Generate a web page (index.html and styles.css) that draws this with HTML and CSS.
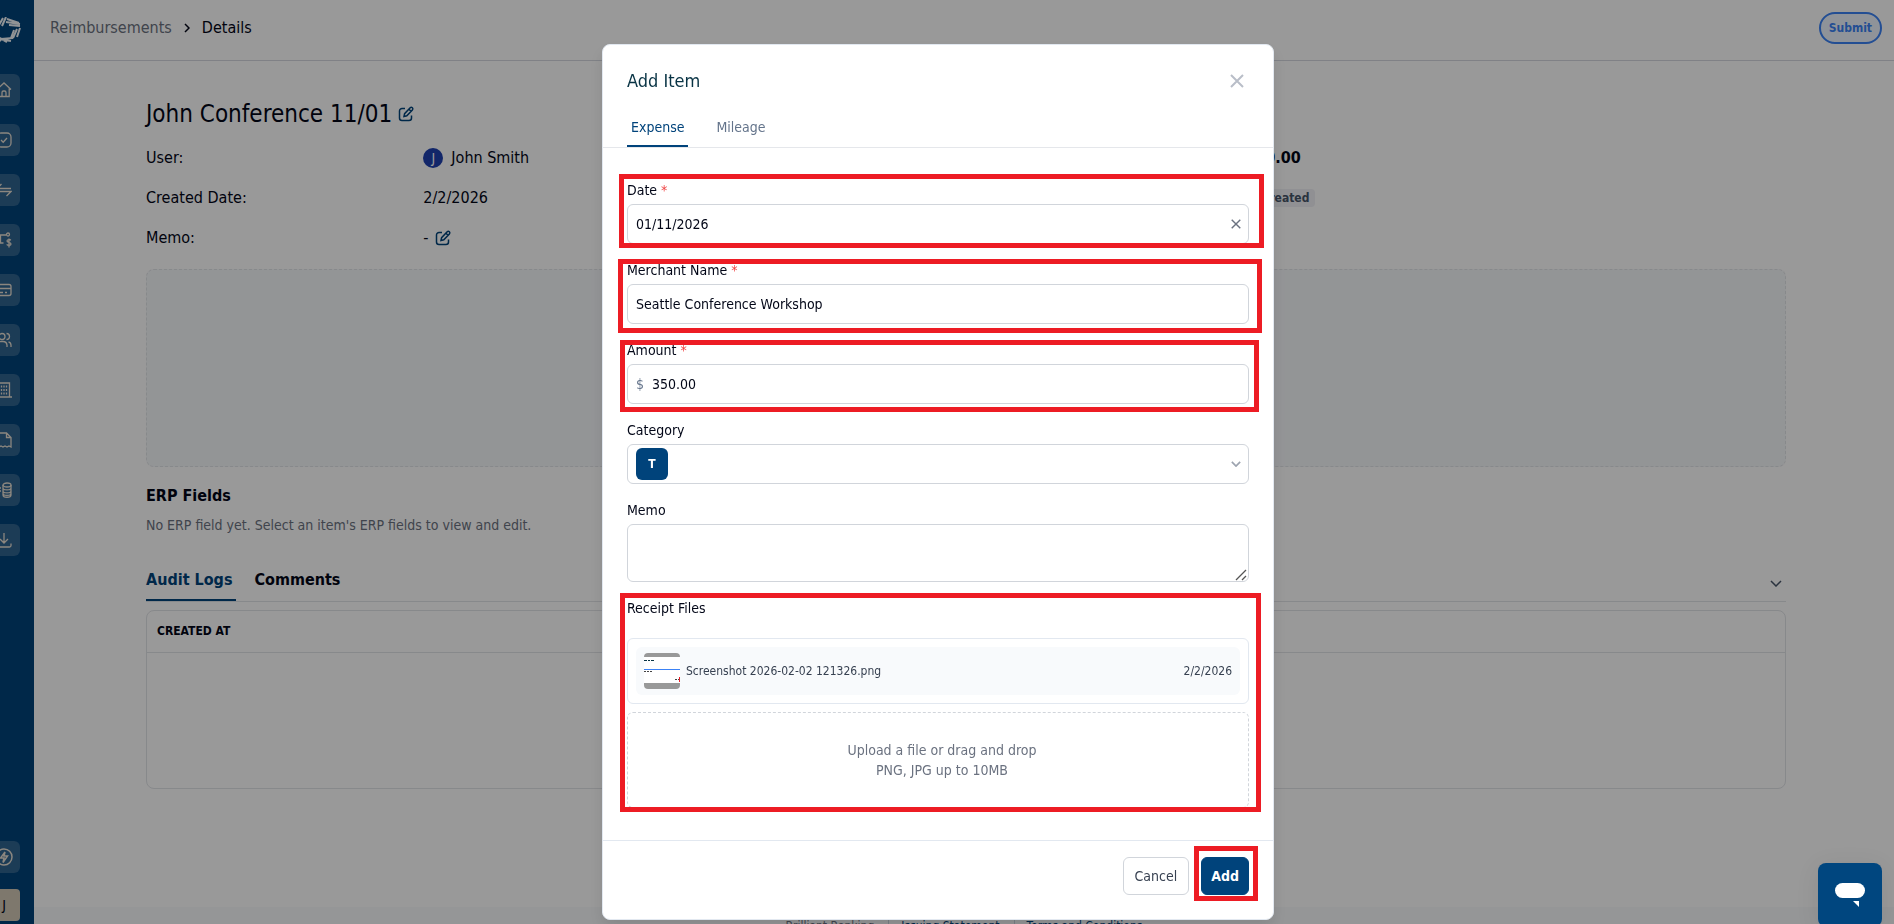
FILE: index.html
```html
<!DOCTYPE html>
<html lang="en">

<head>
    <meta charset="utf-8">
    <meta name="viewport" content="width=device-width, initial-scale=1.0">
    <title>Reimbursements - Details</title>
    <link rel="stylesheet" href="styles.css">
</head>

<body>

    <!-- icons used more than once -->
    <svg width="0" height="0" class="sprite">
        <symbol id="edit" viewBox="0 0 16 16">
            <path d="M7 2.500H4A2.500 2.500 0 0 0 1.500 5v7A2.500 2.500 0 0 0 4 14.500h7a2.500 2.500 0 0 0 2.500-2.500V9.500M6 10.500l.6-2.800 5.600-5.900a1.500 1.500 0 0 1 2.200 2.100L8.800 9.800zM11 3.200l2 2" />
        </symbol>
        <symbol id="cross" viewBox="0 0 14 14">
            <path d="M1 1l12 12M13 1L1 13" />
        </symbol>
        <symbol id="down" viewBox="0 0 12 7">
            <path d="M1 1l5 5 5-5" />
        </symbol>
    </svg>

    <div class="app">
        <nav class="sidebar" aria-label="Main">
            <svg class="logo" viewBox="0 0 34 26">
                <path d="M12 8l4-7M15 9l4-9M9 8l3-6M20 2l12 4M19 5l14 2M22 8l11 1M30 12l-4 9M33 11l-3 9M27 13l-3 8M26 21l-12 1M24 24l-12-2M20 25l-11-6M14 24l-7-4M7 20L3 11M5 18L1 10M9 17l-3-7M2 9l7-5M4 11l7-4" />
            </svg>
            <button class="nav-btn" aria-label="Home"><svg viewBox="0 0 16 16"><path d="M1 7.500L8 1l7 6.500M2.800 6.500v8h10.400v-8M6 14.500v-4a1.500 1.500 0 0 1 1.500-1.500h1A1.500 1.500 0 0 1 10 10.500v4" /></svg></button>
            <button class="nav-btn" aria-label="Approvals"><svg viewBox="0 0 16 16"><rect x="1" y="1" width="14" height="14" rx="4" /><path d="M5 8l2.200 2.200L11 6" /></svg></button>
            <button class="nav-btn" aria-label="Transfers"><svg viewBox="0 0 16 16"><path d="M15 6.500H1L5.500 2M1 9.500h14L10.500 14" /></svg></button>
            <button class="nav-btn" aria-label="Payments"><svg viewBox="0 0 16 16"><path d="M1 3h9M4.500 3v8h3M14.800 8.300c-.8-1.200-3.800-1-3.800.7s4 1 4 2.900-3.300 1.800-4.300.4M13 6.500v9" /><circle cx="12" cy="2.500" r="1.500" /></svg></button>
            <button class="nav-btn" aria-label="Cards"><svg viewBox="0 0 16 16"><rect x="1" y="2.500" width="14" height="11" rx="2" /><path d="M1 6.500h14M4 10.500h3M9 10.500h2" /></svg></button>
            <button class="nav-btn" aria-label="Users"><svg viewBox="0 0 16 16"><circle cx="6" cy="4.500" r="3" /><path d="M1 15v-2a4 4 0 0 1 4-3.500h2a4 4 0 0 1 4 3.500v2M10.500 1.500a3 3 0 0 1 0 6M12.500 9.800A3.500 3.500 0 0 1 15 13v2" /></svg></button>
            <button class="nav-btn" aria-label="Companies"><svg viewBox="0 0 16 16"><path d="M0 15h16M2 15V1h11.500v14" /><path d="M5.500 3.500v9M8 3.500v9M10.500 3.500v9" stroke-dasharray="2 1.500" /></svg></button>
            <button class="nav-btn" aria-label="Receipts"><svg viewBox="0 0 16 16"><path d="M1 15V1h9.500L15 5.500V15l-2-1-2 1-2-1-2 1-2-1-2 1zM10.500 1v4.500H15" /></svg></button>
            <button class="nav-btn" aria-label="Accounting"><svg viewBox="0 0 16 16"><ellipse cx="11" cy="3" rx="4" ry="2" /><path d="M7 3v10c0 3 8 3 8 0V3M7 6c0 2.500 8 2.500 8 0M7 9c0 2.500 8 2.500 8 0M7 11.500c0 2.500 8 2.500 8 0M1 6h4M1 9h4" /></svg></button>
            <button class="nav-btn" aria-label="Downloads"><svg viewBox="0 0 16 16"><path d="M8 1v9.500M4 7l4 4 4-4M1 11.500v2A1.500 1.500 0 0 0 2.500 15h11a1.500 1.500 0 0 0 1.500-1.500v-2" /></svg></button>
            <div class="sidebar-bottom">
                <button class="nav-btn round" aria-label="Quick actions"><svg viewBox="0 0 18 18"><circle cx="9" cy="9" r="8" /><path d="M10 4L5.500 10H9l-1 4.500L12.500 8H9z" /></svg></button>
                <button class="account">J</button>
            </div>
        </nav>

        <div class="page">
            <header class="topbar">
                <div class="crumbs">
                    <a href="#">Reimbursements</a>
                    <svg viewBox="0 0 6 10"><path d="M1 1l4 4-4 4" /></svg>
                    <span>Details</span>
                </div>
                <button class="submit">Submit</button>
            </header>

            <main class="content">
                <h1>John Conference 11/01 <svg class="edit"><use href="#edit" /></svg></h1>

                <div class="info">
                    <dl>
                        <dt>User:</dt>
                        <dd><span class="avatar">J</span>John Smith</dd>
                        <dt>Created Date:</dt>
                        <dd>2/2/2026</dd>
                        <dt>Memo:</dt>
                        <dd class="memo">- <svg class="edit"><use href="#edit" /></svg></dd>
                    </dl>
                    <dl>
                        <dt>Total Amount:</dt>
                        <dd><b>$0.00</b></dd>
                        <dt>Status:</dt>
                        <dd><span class="badge">Created</span></dd>
                    </dl>
                </div>

                <div class="items-empty"></div>

                <h2>ERP Fields</h2>
                <p class="hint">No ERP field yet. Select an item's ERP fields to view and edit.</p>

                <div class="log-tabs">
                    <button class="active">Audit Logs</button>
                    <button>Comments</button>
                    <svg class="collapse"><use href="#down" /></svg>
                </div>
                <div class="log-table">
                    <table>
                        <thead>
                            <tr>
                                <th>CREATED AT</th>
                            </tr>
                        </thead>
                    </table>
                </div>
            </main>

            <footer class="page-footer">
                <span>Brilliant Banking</span>
                <a href="#">Issuing Statement</a>
                <a href="#">Terms and Conditions</a>
            </footer>
        </div>
    </div>

    <div class="overlay">
        <form class="modal" role="dialog" aria-labelledby="modal-title">
            <div class="modal-head">
                <h3 id="modal-title">Add Item</h3>
                <button type="button" class="close" aria-label="Close"><svg><use href="#cross" /></svg></button>
            </div>
            <div class="tabs">
                <button type="button" class="active">Expense</button>
                <button type="button">Mileage</button>
            </div>

            <div class="modal-body">
                <div class="field mark mark-date">
                    <label for="date">Date <span class="req">*</span></label>
                    <div class="control">
                        <input type="text" id="date" value="01/11/2026">
                        <button type="button" class="clear" aria-label="Clear date"><svg><use href="#cross" /></svg></button>
                    </div>
                </div>

                <div class="field mark mark-merchant">
                    <label for="merchant">Merchant Name <span class="req">*</span></label>
                    <div class="control">
                        <input type="text" id="merchant" value="Seattle Conference Workshop">
                    </div>
                </div>

                <div class="field mark mark-amount">
                    <label for="amount">Amount <span class="req">*</span></label>
                    <div class="control">
                        <span class="currency">$</span>
                        <input type="text" id="amount" value="350.00">
                    </div>
                </div>

                <div class="field">
                    <label for="category">Category</label>
                    <div class="control">
                        <span class="chip">T</span>
                        <select id="category">
                            <option></option>
                        </select>
                        <svg class="arrow"><use href="#down" /></svg>
                    </div>
                </div>

                <div class="field">
                    <label for="memo">Memo</label>
                    <div class="memo-box">
                        <textarea id="memo"></textarea>
                        <svg class="grip" viewBox="0 0 12 12"><path d="M1 11L11 1M7 11l4-4" /></svg>
                    </div>
                </div>

                <div class="field receipts mark mark-receipts">
                    <label for="receipt">Receipt Files</label>
                    <div class="files">
                        <div class="file">
                            <svg class="thumb" viewBox="0 0 36 36">
                                <rect width="36" height="36" fill="#fff" />
                                <rect width="36" height="4" fill="#999" />
                                <rect y="30" width="36" height="6" fill="#999" />
                                <rect y="16" width="36" height="1" fill="#3b82f6" />
                                <path d="M0 7.500h10" stroke="#083344" stroke-dasharray="3 1 2 1" />
                                <path d="M0 18.500h8M31 26.500h4" stroke="#444" stroke-dasharray="2 1" />
                                <rect x="35" y="24" width="1" height="5" fill="#ed1c24" />
                            </svg>
                            <span>Screenshot 2026-02-02 121326.png</span>
                            <span class="file-date">2/2/2026</span>
                        </div>
                    </div>
                    <label class="dropzone">
                        <input type="file" id="receipt">
                        <span>Upload a file or drag and drop</span>
                        <span>PNG, JPG up to 10MB</span>
                    </label>
                </div>
            </div>

            <div class="modal-foot">
                <button type="button" class="btn">Cancel</button>
                <div class="mark mark-add">
                    <button type="submit" class="btn primary">Add</button>
                </div>
            </div>
        </form>
    </div>

    <button class="chat" aria-label="Open chat">
        <svg viewBox="0 0 30 24"><rect width="30" height="15" rx="7.500" /><path d="M18 18h6v6z" /></svg>
    </button>

</body>

</html>
```
FILE: styles.css
```css
* {
    box-sizing: border-box;
}

body {
    margin: 0;
    height: 100vh;
    overflow: hidden;
    font-family: Tahoma, "DejaVu Sans Condensed", "Noto Sans", sans-serif;
    font-size: 16px;
    line-height: 24px;
    color: #020617;
}

h1, h2, h3, p, dl, dd {
    margin: 0;
}

button, input, select, textarea {
    font: inherit;
    color: inherit;
    padding: 0;
    border: 0;
    background: none;
}

a {
    text-decoration: none;
}

svg {
    fill: none;
    stroke: currentColor;
    flex: none;
}

.sprite {
    position: absolute;
}

.app {
    display: flex;
    height: 100vh;
}

/* sidebar, slid partly off the left edge */

.sidebar {
    width: 34px;
    flex: none;
    display: flex;
    flex-direction: column;
    align-items: flex-end;
    gap: 18px;
    padding: 17px 14px 3px 0;
    overflow: hidden;
    background: #00437b;
    color: #e8e0d4;
}

.logo {
    width: 34px;
    height: 26px;
    margin: 0 -1px 13px 0;
    color: #f1f5f9;
    stroke-width: 2;
}

.nav-btn {
    width: 32px;
    height: 32px;
    flex: none;
    display: flex;
    align-items: center;
    justify-content: center;
    border-radius: 6px;
    background: #2f6490;
}

.nav-btn svg {
    width: 16px;
    height: 16px;
    stroke-width: 1.3;
}

.nav-btn.round svg {
    width: 18px;
    height: 18px;
    stroke-width: 1.5;
}

.sidebar-bottom {
    margin-top: auto;
    display: flex;
    flex-direction: column;
    gap: 16px;
}

.account {
    width: 32px;
    height: 32px;
    border-radius: 4px;
    background: #d3c9b6;
    color: #020617;
    font-size: 14px;
}

/* page behind the dialog */

.page {
    flex: 1;
    min-width: 0;
}

.topbar {
    display: flex;
    align-items: center;
    justify-content: space-between;
    height: 61px;
    padding: 0 12px 4px 16px;
    border-bottom: 1px solid #d5d8e0;
}

.crumbs {
    display: flex;
    align-items: center;
    gap: 12px;
}

.crumbs a {
    color: #6b7280;
}

.crumbs svg {
    width: 6px;
    height: 10px;
    stroke-width: 1.5;
}

.submit {
    height: 32px;
    padding: 0 8px;
    border: 2px solid #3b82f6;
    border-radius: 16px;
    background: #eff6ff;
    color: #3b82f6;
    font-size: 12px;
    font-weight: bold;
}

.content {
    padding: 37px 108px 118px 112px;
}

h1 {
    display: flex;
    align-items: center;
    gap: 6px;
    font-size: 24px;
    line-height: 32px;
    font-weight: normal;
}

.edit {
    width: 16px;
    height: 16px;
    color: #00437b;
    stroke-width: 1.5;
}

.info {
    display: grid;
    grid-template-columns: 1fr 1fr;
    gap: 24px;
    margin-top: 8px;
}

.info dl {
    display: grid;
    grid-template-columns: 1fr 2fr;
    grid-auto-rows: 40px;
    align-items: center;
    column-gap: 12px;
}

.info dd {
    display: flex;
    align-items: center;
    gap: 8px;
}

.info .memo {
    gap: 6px;
}

.avatar {
    width: 20px;
    height: 20px;
    border-radius: 50%;
    background: #1e40af;
    color: #fff;
    font-size: 14px;
    line-height: 20px;
    text-align: center;
}

.badge {
    padding: 0 6px;
    border-radius: 4px;
    background: #f0f1f5;
    color: #475569;
    font-size: 12px;
    font-weight: bold;
    line-height: 18px;
}

.items-empty {
    height: 198px;
    margin-top: 11px;
    border: 1px dashed #e2e4e8;
    border-radius: 8px;
    background: #f6f8fb;
}

h2 {
    margin-top: 17px;
    font-size: 16px;
}

.hint {
    margin-top: 7px;
    font-size: 14px;
    line-height: 20px;
    color: #6b7280;
}

.log-tabs {
    display: flex;
    gap: 18px;
    margin-top: 33px;
    border-bottom: 1px solid #e2e4e8;
}

.log-tabs button {
    padding: 0 4px 7px 0;
    border-bottom: 2px solid transparent;
    font-weight: bold;
}

.log-tabs .active {
    color: #00437b;
    border-color: #00437b;
}

.collapse {
    width: 12px;
    height: 7px;
    margin: 12px 4px 0 auto;
    color: #475569;
    stroke-width: 1.5;
}

.log-table {
    height: 179px;
    margin-top: 8px;
    border: 1px solid #e2e4e8;
    border-radius: 8px;
}

.log-table table {
    width: 100%;
    border-collapse: collapse;
}

.log-table th {
    height: 41px;
    padding: 0 10px;
    border-bottom: 1px solid #e2e4e8;
    text-align: left;
    font-size: 12px;
}

.page-footer {
    display: flex;
    justify-content: center;
    padding: 11px 0;
    background: #f8fafc;
    color: #6b7280;
    font-size: 12px;
    line-height: 16px;
}

.page-footer a {
    margin-left: 14px;
    padding-left: 12px;
    border-left: 1px solid #cbd5e1;
    color: #00437b;
}

/* dialog */

.overlay {
    position: fixed;
    inset: 0;
    display: flex;
    justify-content: center;
    align-items: flex-start;
    padding: 44px 18px 0 0;
    background: rgba(0, 0, 0, 0.4);
}

.modal {
    width: 100%;
    max-width: 672px;
    border: 1px solid #e2e8f0;
    border-radius: 8px;
    background: #fff;
    box-shadow: 0 8px 16px rgba(0, 0, 0, 0.1);
    font-size: 14px;
    line-height: 20px;
}

.modal-head {
    display: flex;
    align-items: center;
    justify-content: space-between;
    padding: 24px 29px 24px 24px;
}

h3 {
    font-size: 18px;
    line-height: 24px;
    font-weight: normal;
    color: #083344;
}

.close,
.clear {
    display: flex;
}

.close svg {
    width: 14px;
    height: 14px;
    color: #b9bec8;
    stroke-width: 2;
}

.tabs {
    display: flex;
    gap: 24px;
    padding: 0 24px;
    border-bottom: 1px solid #e5e7eb;
}

.tabs button {
    padding: 0 4px 8px;
    border-bottom: 2px solid transparent;
    color: #64748b;
}

.tabs .active {
    color: #00437b;
    border-color: #00437b;
}

.modal-body {
    display: flex;
    flex-direction: column;
    gap: 16px;
    padding: 32px 24px;
}

.field {
    display: flex;
    flex-direction: column;
    gap: 4px;
}

.req {
    color: #ef4444;
}

.control {
    display: flex;
    align-items: center;
    gap: 8px;
    height: 40px;
    padding: 0 7px 0 8px;
    border: 1px solid #d1d5db;
    border-radius: 6px;
}

.control input,
.control select {
    flex: 1;
    min-width: 0;
    height: 38px;
    outline: none;
    appearance: none;
}

.currency {
    color: #64748b;
}

.clear svg {
    width: 10px;
    height: 10px;
    color: #6b7280;
    stroke-width: 2;
}

.arrow {
    width: 10px;
    height: 6px;
    color: #9ca3af;
    stroke-width: 2;
}

.chip {
    width: 32px;
    height: 32px;
    border-radius: 6px;
    background: #00437b;
    color: #fff;
    font-size: 12px;
    font-weight: bold;
    line-height: 32px;
    text-align: center;
}

.memo-box {
    position: relative;
    display: flex;
}

.memo-box textarea {
    width: 100%;
    height: 58px;
    padding: 8px;
    border: 1px solid #d1d5db;
    border-radius: 6px;
    resize: none;
}

.grip {
    position: absolute;
    right: 2px;
    bottom: 1px;
    width: 12px;
    height: 12px;
    color: #555;
    stroke-width: 1.3;
}

.receipts {
    gap: 8px;
}

.files {
    margin-top: 12px;
    padding: 8px;
    border: 1px solid #e2e8f0;
    border-radius: 6px;
}

.file {
    display: flex;
    align-items: center;
    gap: 6px;
    height: 48px;
    padding: 0 8px;
    border-radius: 6px;
    background: #f8fafc;
    color: #374151;
    font-size: 12px;
}

.thumb {
    width: 36px;
    height: 36px;
    border-radius: 4px;
}

.thumb rect {
    stroke: none;
}

.file-date {
    margin-left: auto;
}

.dropzone {
    display: flex;
    flex-direction: column;
    align-items: center;
    justify-content: center;
    height: 96px;
    padding-left: 8px;
    border: 1px dashed #d1d5db;
    border-radius: 6px;
    color: #6b7280;
}

.dropzone input {
    display: none;
}

.modal-foot {
    display: flex;
    justify-content: flex-end;
    gap: 12px;
    padding: 16px 24px 24px;
    border-top: 1px solid #e2e8f0;
}

.btn {
    height: 38px;
    padding: 0 11px;
    border: 1px solid #d1d5db;
    border-radius: 6px;
    color: #374151;
}

.btn.primary {
    padding: 0 9px;
    border-color: #00437b;
    background: #00437b;
    color: #fff;
    font-weight: bold;
}

/* red outlines over the parts to fill in */

.mark {
    position: relative;
}

.mark::after {
    content: "";
    position: absolute;
    border: 5px solid #ed1c24;
    pointer-events: none;
}

.mark-date::after {
    inset: -6px -15px -4px -8px;
}

.mark-merchant::after {
    inset: -1px -13px -9px -9px;
}

.mark-amount::after {
    inset: 0 -10px -8px -7px;
}

.mark-receipts::after {
    inset: -5px -12px -4px -7px;
}

.mark-add::after {
    inset: -11px -9px -6px -7px;
}

.chat {
    position: fixed;
    right: 12px;
    bottom: -3px;
    width: 64px;
    height: 64px;
    display: flex;
    align-items: center;
    justify-content: center;
    border-radius: 8px;
    background: #00467f;
    box-shadow: 0 4px 24px rgba(0, 0, 0, 0.08);
}

.chat svg {
    width: 30px;
    height: 24px;
    fill: #fff;
    stroke: none;
}
```
